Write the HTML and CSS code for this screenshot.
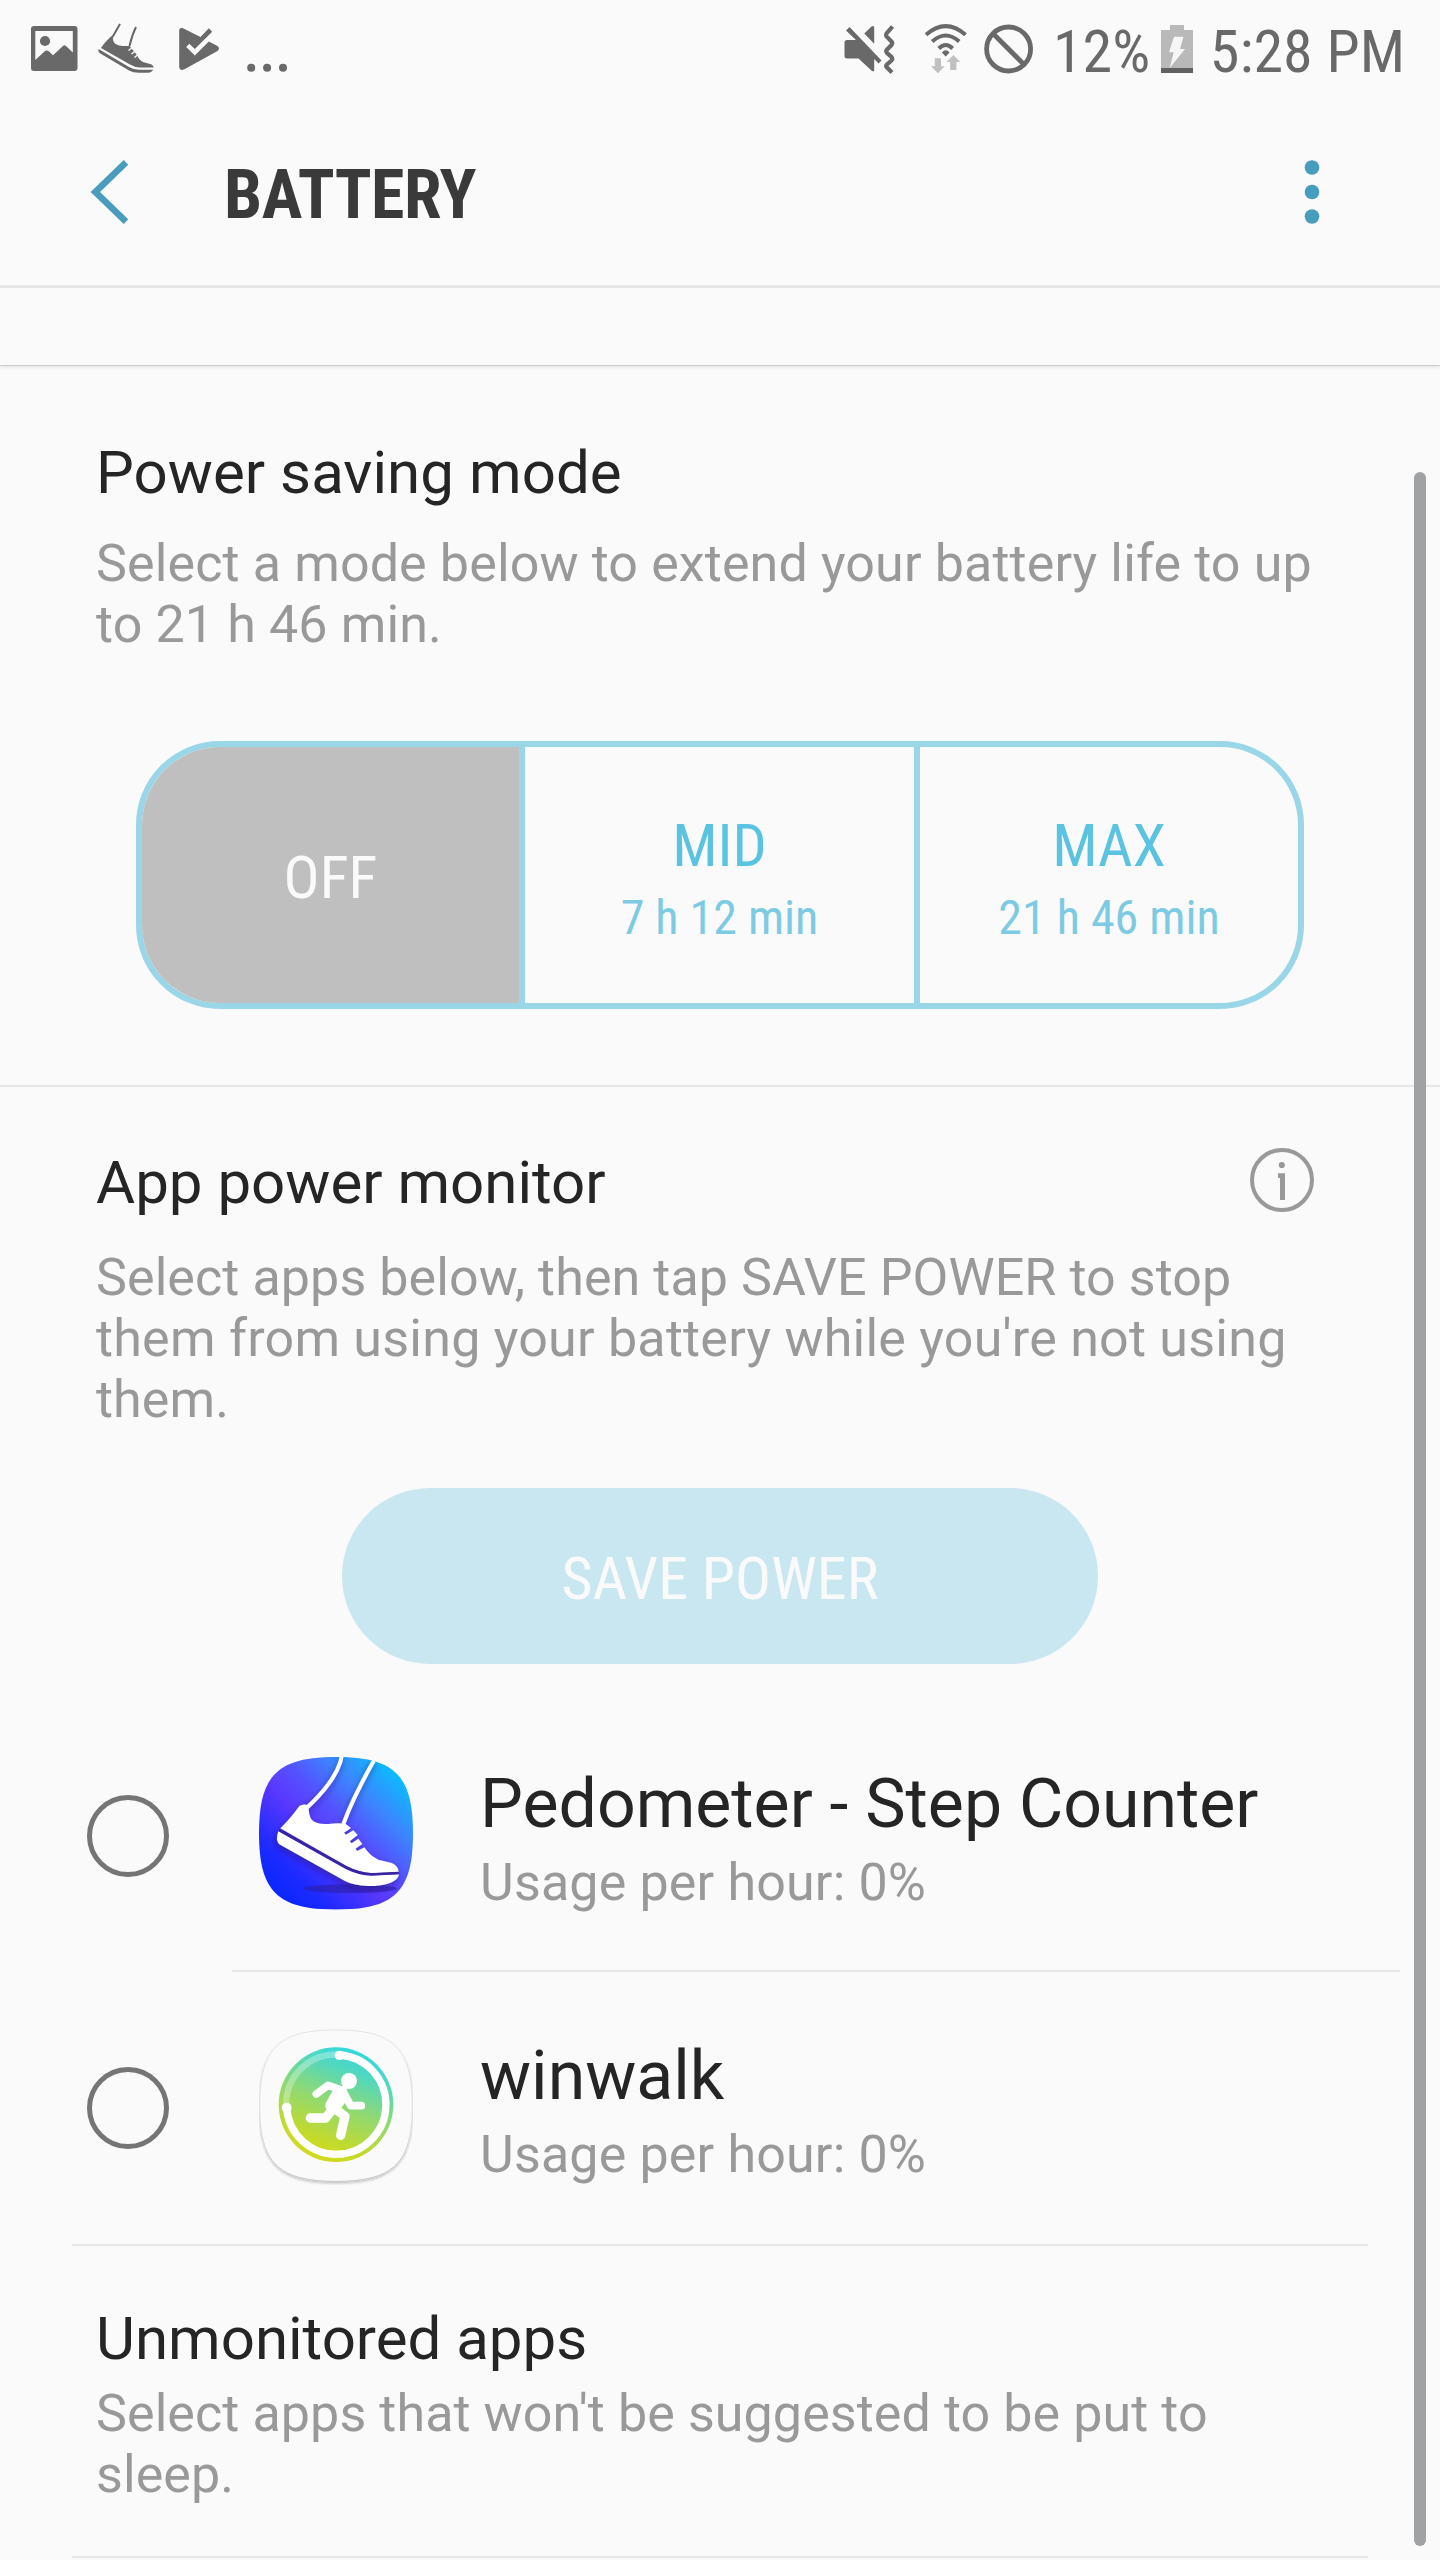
FILE: index.html
```html
<!DOCTYPE html>
<html lang="en">
<head>
<meta charset="utf-8">
<title>Battery</title>
<link rel="stylesheet" href="styles.css">
</head>
<body>
<div class="screen">
  <header class="header">
    <div class="status">
      <div class="status-left">
        <svg width="48" height="52" viewBox="30 22 48 52"><path fill="#696969" fill-rule="evenodd" d="M34 26H74.500Q77.500 26 77.500 29V68Q77.500 71 74.500 71H34Q31 71 31 68V29Q31 26 34 26ZM35.300 31V60L45 51Q46.500 50 48.500 51L53 55.300L63 46Q64.500 44.600 66 46L72.800 52.500V31Z"/><circle cx="45" cy="41" r="5.100" fill="#696969"/></svg>
        <svg width="58" height="52" viewBox="97 22 58 52"><path d="M120 24L112.500 37M136 27Q132 35 129.500 46" stroke="#696969" stroke-width="2" fill="none"/><path fill="#696969" d="M111.500 36Q104 43 101 48L130 64.500Q135 67.500 140 67.500H153.500Q153.500 65 150 64L143 62Q139 60 137 55L129.500 46Q118 46.500 115 43.500Q112.500 41 113 37ZM98.600 49Q97.500 51.500 99.500 53L129 70.500Q133 72.800 139 72.800H148Q152 72.500 153 69.800H139Q134 69.800 129 67Z"/><path d="M128.500 50.500L133 47M131.500 54L136 50.500M134.500 57.500L138.500 54" stroke="#fafafa" stroke-width="1.500"/></svg>
        <svg width="42" height="52" viewBox="178 22 42 52"><path fill="#696969" d="M179.200 30Q179.500 27.500 182.500 28L200.500 37L208.800 28.200L212.200 31.800L194.800 49L189.300 43.800L186.200 47L194.800 55.500L208.800 41.500L217.500 46Q220.500 48.500 217.500 51L184 69.600Q180.200 71 179.200 67.500Z"/></svg>
        <svg width="42" height="52" viewBox="246 22 42 52" fill="#696969"><circle cx="251.200" cy="67.700" r="4"/><circle cx="267.100" cy="67.700" r="4"/><circle cx="283" cy="67.700" r="4"/></svg>
      </div>
      <div class="status-right">
        <svg width="52" height="52" viewBox="844 22 52 52"><path fill="#696969" d="M847 40H856L846 30.500L849.500 27L881.500 60.500L878.500 63.500L874.200 59V70Q874 72 872 71L858.500 58.500H847Q844.500 58.500 844.500 56V42.500Q844.500 40 847 40ZM864.300 33.500L871.500 26.500Q874.200 25 874.200 27.500V43.800Z"/><path d="M892.500 26.500L886.500 33.500Q885.500 35 886.500 36.500L891.500 41.500Q893 43 891.500 45L887 49.500Q885.500 51 887 53L891.500 57Q893 59 891.500 60.500L887 64.500Q885.500 66 887 67.500L892 72.500" fill="none" stroke="#696969" stroke-width="4.200"/></svg>
        <svg width="44" height="52" viewBox="924 22 44 52"><g fill="none" stroke="#696969" stroke-width="4"><path d="M926 34.800Q945.700 17.500 965.500 34.800"/><path d="M932.200 41.500Q945.700 29.500 959.200 41.500"/><path d="M938.800 48.500Q945.700 41.500 952.600 48.500"/></g><path d="M941.800 52.500Q945.700 48 949.600 52.500L945.700 56.500Z" fill="#696969"/><path d="M934.800 58.300H941V66.300H944.700L937.900 73.300L931 66.300H934.800ZM950.200 70V62H946.500L953.300 55L960.200 62H956.400V70Z" fill="#c0c0c0"/></svg>
        <svg width="50" height="52" viewBox="984 22 50 52"><g fill="none" stroke="#696969" stroke-width="4.800"><circle cx="1008.600" cy="49" r="22"/><path d="M993 33.500L1024 64.500"/></g></svg>
        <span class="percent">12%</span>
        <svg width="32" height="52" viewBox="1162 22 32 52"><path fill="#b9b9b9" d="M1162 30H1171V25H1185V30H1194V68H1162Z"/><path fill="#616161" d="M1162 68H1194V73H1162Z"/><path fill="#f6f6f6" d="M1175 36.700H1184.500L1181 49H1186L1170.700 68L1174.700 52.300H1170Z"/></svg>
        <span class="clock">5:28 PM</span>
      </div>
    </div>
    <div class="toolbar">
      <svg width="40" height="64" viewBox="88 160 40 64"><path d="M126 162.400L95.400 192L126 221.600" fill="none" stroke="#489dbd" stroke-width="6.600"/></svg>
      <h1 class="title">BATTERY</h1>
      <svg width="16" height="64" viewBox="1304 160 16 64" fill="#489dbd"><circle cx="1312" cy="167.500" r="7.300"/><circle cx="1312" cy="192" r="7.300"/><circle cx="1312" cy="216.500" r="7.300"/></svg>
    </div>
  </header>

  <section class="section saving">
    <h2 class="heading">Power saving mode</h2>
    <p class="desc">Select a mode below to extend your battery life to up to 21 h 46 min.</p>
    <div class="modes">
      <div class="mode off"><span class="mode-name">OFF</span></div>
      <div class="mode"><span class="mode-name">MID</span><span class="mode-time">7 h 12 min</span></div>
      <div class="mode"><span class="mode-name">MAX</span><span class="mode-time">21 h 46 min</span></div>
    </div>
  </section>
  <hr class="line">

  <section class="section monitor">
    <div class="heading-row">
      <h2 class="heading">App power monitor</h2>
      <svg width="64" height="64" viewBox="0 0 64 64"><circle cx="32" cy="32" r="30" fill="none" stroke="#999" stroke-width="4"/><circle cx="31.800" cy="17" r="3.100" fill="#999"/><path d="M28 25.300H35V52H30V30H28Z" fill="#999"/></svg>
    </div>
    <p class="desc">Select apps below, then tap SAVE POWER to stop <span class="loose">them from using your battery while you're not using</span> them.</p>
    <div class="save">SAVE POWER</div>
  </section>

  <div class="app">
    <span class="radio"></span>
    <svg class="app-icon" width="154" height="158" viewBox="597 108 462 474">
      <defs>
        <linearGradient id="sky" gradientUnits="userSpaceOnUse" x1="655" y1="520" x2="1010" y2="165"><stop offset="0" stop-color="#0b27ff"/><stop offset=".15" stop-color="#1d2aff"/><stop offset=".42" stop-color="#5a38ff"/><stop offset=".58" stop-color="#5450ff"/><stop offset=".78" stop-color="#3d85ff"/><stop offset="1" stop-color="#0cbaff"/></linearGradient>
        <clipPath id="tile"><path d="M828 111C1003 111 1059 165 1059 340S1003 569 828 569S597 515 597 340S653 111 828 111Z"/></clipPath>
        <filter id="soft" x="-20%" y="-20%" width="140%" height="150%"><feDropShadow dx="-3" dy="10" stdDeviation="9" flood-color="#1a1070" flood-opacity=".5"/></filter>
      </defs>
      <g clip-path="url(#tile)">
        <path d="M597 111H1059V569H597Z" fill="url(#sky)"/>
        <ellipse cx="870" cy="506" rx="142" ry="13" fill="#2a1d9c" opacity=".55"/>
        <g filter="url(#soft)">
          <path d="M846 105Q835 175 742 262M944 118Q880 230 850 312" fill="none" stroke="#fff" stroke-width="12"/>
          <path fill="#fff" d="M661 325Q690 297 718 258Q730 249 746 257Q745 287 756 300Q770 314 805 312Q840 307 858 313L873 324L852 338L858 344L880 331L893 345L869 364L875 370L895 356L907 372L886 386L892 393L913 382Q930 408 955 419L995 429Q1014 436 1016 456L935 459Q895 456 860 438Z"/>
          <path fill="#fff" d="M655 334L855 446Q895 466 935 467L1017 463Q1014 480 992 488Q965 498 925 498Q882 497 855 483L658 373Q645 360 655 334Z"/>
        </g>
        <path d="M658 331L858 442Q898 462 935 463L1016 459" fill="none" stroke="#3a22a0" stroke-width="7"/>
      </g>
    </svg>
    <div class="app-text">
      <div class="app-name">Pedometer - Step Counter</div>
      <div class="app-usage">Usage per hour: 0%</div>
    </div>
  </div>
  <hr class="line line-row">
  <div class="app">
    <span class="radio"></span>
    <svg class="app-icon" width="154" height="158" viewBox="597 144 462 474">
      <defs>
        <linearGradient id="lime" gradientUnits="userSpaceOnUse" x1="760" y1="530" x2="885" y2="205"><stop offset="0" stop-color="#d2db1c"/><stop offset=".15" stop-color="#c5da29"/><stop offset=".5" stop-color="#8fd973"/><stop offset=".8" stop-color="#51d8be"/><stop offset="1" stop-color="#30d8e2"/></linearGradient>
        <linearGradient id="edge" x1="0" y1="0" x2="0" y2="1"><stop offset="0" stop-color="#e6e6e6"/><stop offset=".7" stop-color="#d8d8d8"/><stop offset="1" stop-color="#c4c4c4"/></linearGradient>
        <filter id="lift" x="-5%" y="-5%" width="110%" height="112%"><feDropShadow dx="0" dy="5" stdDeviation="3" flood-color="#000" flood-opacity=".22"/></filter>
      </defs>
      <path d="M828 150C1000 150 1057 205 1057 377S1000 604 828 604S599 549 599 377S656 150 828 150Z" fill="#fafafa" stroke="url(#edge)" stroke-width="3" filter="url(#lift)"/>
      <circle cx="828" cy="374" r="172" fill="url(#lime)"/>
      <path d="M679 382A149 149 0 0 1 839 224" fill="none" stroke="#fff" stroke-opacity=".3" stroke-width="19"/>
      <path d="M839 225A149 149 0 1 1 680 383" fill="none" stroke="#fff" stroke-width="22"/>
      <circle cx="838" cy="226" r="14" fill="#fff"/><circle cx="680" cy="383" r="15" fill="#fff"/>
      <circle cx="867" cy="303" r="24" fill="#fff"/>
      <g fill="none" stroke="#fff" stroke-linecap="round" stroke-linejoin="round"><path d="M769 342L804 316L850 332" stroke-width="23"/><path d="M850 336L872 377H904" stroke-width="23"/><path d="M751 414H797L820 385" stroke-width="28"/><path d="M820 382L855 409L842 466" stroke-width="28"/></g>
      <path d="M822 325L862 335Q870 352 843 385L815 400Q790 390 797 370Z" fill="#fff"/>
    </svg>
    <div class="app-text">
      <div class="app-name">winwalk</div>
      <div class="app-usage">Usage per hour: 0%</div>
    </div>
  </div>
  <hr class="line line-inset">

  <section class="section unmonitored">
    <h2 class="heading">Unmonitored apps</h2>
    <p class="desc">Select apps that won't be suggested to be put to sleep.</p>
  </section>
  <hr class="line line-inset">

  <div class="scrollbar"></div>
</div>
</body>
</html>
```
FILE: styles.css
```css
* { box-sizing: border-box; }
body { margin: 0; background: #fafafa; font-family: Roboto, sans-serif; color: #252525; }
svg { display: block; flex: none; }
h1, h2, p { margin: 0; font-weight: 400; }

.screen { position: relative; width: 1440px; height: 2560px; overflow: hidden; }

.header { height: 366px; border-bottom: 1px solid #cbcbcb; box-shadow: 0 1px 4px rgba(0, 0, 0, .1); }
.status { display: flex; justify-content: space-between; height: 96px; padding: 0 35px 0 30px; font: 60px/96px "Roboto Condensed", Roboto, sans-serif; color: #696969; }
.status-left, .status-right { display: flex; align-items: center; }
.status-left { gap: 19px; }
.status-left svg:nth-child(3) { margin-left: 4px; }
.status-left svg:nth-child(4) { margin-left: 7px; }
.status-right { width: 561px; }
.status-right svg:nth-of-type(2) { margin-left: 28px; }
.status-right svg:nth-of-type(3) { margin-left: 16px; }
.percent { width: 108px; margin-left: 19px; padding-top: 8px; }
.status-right svg:nth-of-type(4) { margin-left: 2px; }
.clock { margin-left: 17px; padding-top: 8px; white-space: nowrap; }

.toolbar { display: flex; align-items: center; height: 192px; padding: 3px 120px 0 88px; border-bottom: 3px solid #e7e7e7; }
.title { flex: 1; margin-left: 96px; padding-top: 6px; font: 700 68px/80px "Roboto Condensed", Roboto, sans-serif; letter-spacing: -.5px; color: #3a3a3a; }

.section { padding: 0 104px 0 96px; }
.heading { font-size: 60px; line-height: 70px; letter-spacing: .05px; }
.desc { font-size: 52px; line-height: 61px; letter-spacing: .13px; color: #999; }

.line { height: 2px; margin: 0; border: 0; background: #e6e6e6; }
.line-row { margin: 0 40px 0 232px; }
.line-inset { margin: 0 72px; }

.saving { padding-top: 72px; padding-bottom: 76px; }
.saving .desc { margin-top: 25px; }
.modes { display: grid; grid-template-columns: 377px 395px 384px; width: 1168px; height: 268px; margin: 86px 0 0 40px; border: 6px solid #99d6e7; border-radius: 84px; overflow: hidden; font-family: "Roboto Condensed", Roboto, sans-serif; }
.mode { display: flex; flex-direction: column; align-items: center; justify-content: center; padding-top: 6px; color: #59c3e1; }
.mode + .mode { border-left: 6px solid #99d6e7; }
.off { background: #bfbfbf; color: #fafafa; padding-top: 5px; }
.mode-name { font-size: 60px; line-height: 70px; }
.mode-time { margin-top: 9px; font-size: 48px; line-height: 56px; color: #7dcbe2; }

.monitor { padding-top: 61px; }
.monitor .heading, .unmonitored .heading { letter-spacing: 0; }
.heading-row { display: flex; justify-content: space-between; padding-right: 22px; }
.monitor .desc, .unmonitored .desc { letter-spacing: .09px; }
.monitor .desc { margin-top: 29px; }
.loose { letter-spacing: .23px; }
.save { width: 756px; height: 176px; margin: 58px 0 0 246px; padding-top: 3px; border-radius: 88px; background: #c9e7f1; color: #fafafa; font: 60px/176px "Roboto Condensed", Roboto, sans-serif; text-align: center; }

.app { display: flex; align-items: center; height: 270px; padding-left: 87px; }
.monitor + .app { margin-top: 36px; }
.line-row + .app { height: 272px; padding-bottom: 2px; }
.radio { width: 82px; height: 82px; margin-top: 2px; border: 5px solid #757575; border-radius: 50%; }
.app-icon { margin-left: 90px; }
.app-text { margin-left: 67px; padding-top: 7px; }
.app-name { font-size: 68px; line-height: 80px; }
.app-usage { margin-top: 8px; font-size: 52px; line-height: 61px; letter-spacing: .16px; color: #999; }

.unmonitored { padding-top: 58px; padding-bottom: 51px; }
.unmonitored .desc { margin-top: 9px; }

.scrollbar { position: absolute; left: 1414px; top: 472px; width: 12px; height: 2074px; border-radius: 6px; background: #a1a2a4; }
```
